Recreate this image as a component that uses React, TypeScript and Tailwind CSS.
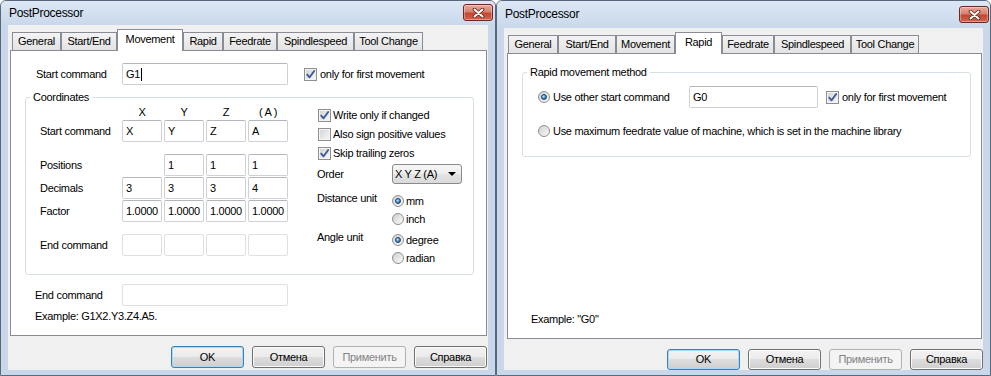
import React from "react";

const font =
  "font-['Liberation_Sans',Arial,sans-serif] text-[11px] tracking-[-0.3px] text-black";

const btnGrad =
  "bg-[linear-gradient(#f2f2f2_0%,#ebebeb_50%,#dddddd_50%,#cfcfcf_100%)]";

function Check({ on }: { on?: boolean }) {
  return (
    <span className="flex h-[13px] w-[13px] shrink-0 items-center justify-center border border-[#8f8f8f] bg-[linear-gradient(135deg,#d2d2d2,#f9f9f9)] shadow-[inset_0_0_0_1px_#f4f4f4]">
      {on && (
        <svg width="11" height="11" viewBox="0 0 11 11">
          <path
            d="M2.2 5.6 L4.6 8.3 L9.2 2"
            fill="none"
            stroke="#3c5a9a"
            strokeWidth="1.9"
            strokeLinecap="round"
            strokeLinejoin="round"
          />
        </svg>
      )}
    </span>
  );
}

function Radio({ on }: { on?: boolean }) {
  return (
    <span className="flex h-[12px] w-[12px] shrink-0 items-center justify-center rounded-full border border-[#8e8f8f] bg-[linear-gradient(135deg,#cfcfcf,#fbfbfb)]">
      {on && (
        <span className="h-[6px] w-[6px] rounded-full border border-[#1c3f66] bg-[radial-gradient(circle_at_35%_35%,#c6e6fb_0%,#4a95d1_50%,#154b80_100%)]" />
      )}
    </span>
  );
}

function Field({
  className,
  light,
  children,
}: {
  className: string;
  light?: boolean;
  children?: React.ReactNode;
}) {
  return (
    <div
      className={`flex h-[22px] shrink-0 items-center rounded-[2px] border bg-white px-[3px] ${
        light ? "border-[#e0e0e0]" : "border-[#cdd0d6] border-t-[#b3b6bd]"
      } ${className}`}
    >
      {children}
    </div>
  );
}

function Btn({ label, kind }: { label: string; kind?: "default" | "disabled" }) {
  const cls =
    kind === "disabled"
      ? "border-[#adb2b5] bg-[#f4f4f4] text-[#838383]"
      : kind === "default"
      ? `border-[#3c7fb1] ${btnGrad} shadow-[inset_0_0_0_1px_#a6dbf7]`
      : `border-[#707070] ${btnGrad} shadow-[inset_0_0_0_1px_#fbfbfb]`;
  return (
    <div
      className={`flex h-full w-[73px] items-center justify-center rounded-[3px] border ${cls}`}
    >
      {label}
    </div>
  );
}

function CloseBtn({ className }: { className: string }) {
  return (
    <div
      className={`flex h-[17px] w-[30px] items-center justify-center rounded-[3px] border border-[#6b2a20] bg-[linear-gradient(#e9a99b_0%,#d88170_45%,#c4472f_55%,#d2654f_100%)] shadow-[inset_0_0_0_1px_rgba(255,255,255,0.35)] ${className}`}
    >
      <svg width="13" height="10" viewBox="0 0 13 10">
        <path
          d="M2.5 1.5 L10.5 8.5 M10.5 1.5 L2.5 8.5"
          stroke="#5a2118"
          strokeWidth="3.6"
          strokeLinecap="round"
        />
        <path
          d="M2.5 1.5 L10.5 8.5 M10.5 1.5 L2.5 8.5"
          stroke="#ffffff"
          strokeWidth="2"
          strokeLinecap="round"
        />
      </svg>
    </div>
  );
}

type TabDef = { label: string; w: string };

function Tabs({ tabs, active }: { tabs: TabDef[]; active: number }) {
  return (
    <div className="ml-[4px] mt-[4px] flex h-[21px] shrink-0 items-end">
      {tabs.map((t, i) =>
        i === active ? (
          <div
            key={t.label}
            className={`relative z-10 -mb-px flex h-[22px] shrink-0 items-center justify-center border border-b-0 border-[#898c95] bg-white pb-[2px] ${t.w}`}
          >
            {t.label}
          </div>
        ) : (
          <div
            key={t.label}
            className={`flex h-[18px] shrink-0 items-center justify-center border border-b-0 border-[#898c95] bg-[linear-gradient(#f3f3f3,#e3e3e3)] ${t.w}`}
          >
            {t.label}
          </div>
        )
      )}
    </div>
  );
}

function TitleBar({
  h,
  textMt,
  closeMt,
  pr,
}: {
  h: string;
  textMt: string;
  closeMt: string;
  pr: string;
}) {
  return (
    <div
      className={`flex shrink-0 items-start justify-between rounded-t-[5px] bg-[linear-gradient(#dce7f5,#c9d8eb)] pl-[8px] ${h} ${pr}`}
    >
      <span className={`text-[12px] leading-[14px] ${textMt}`}>PostProcessor</span>
      <CloseBtn className={closeMt} />
    </div>
  );
}

function Cell({ v, light }: { v?: string; light?: boolean }) {
  return (
    <Field className="w-[40px]" light={light}>
      {v}
    </Field>
  );
}

function LeftDialog() {
  const tabs: TabDef[] = [
    { label: "General", w: "w-[49px]" },
    { label: "Start/End", w: "w-[56px]" },
    { label: "Movement", w: "w-[66px]" },
    { label: "Rapid", w: "w-[40px]" },
    { label: "Feedrate", w: "w-[54px]" },
    { label: "Spindlespeed", w: "w-[77px]" },
    { label: "Tool Change", w: "w-[69px]" },
  ];
  return (
    <div className="flex h-[376px] w-[496px] shrink-0 flex-col rounded-t-[6px] border border-[#59687c] bg-[#c8d7ea]">
      <TitleBar h="h-[24px]" textMt="mt-[5px]" closeMt="mt-[3px]" pr="pr-[2px]" />
      <div className="mx-[7px] flex flex-1 flex-col bg-[#f0f0f0]">
        <Tabs tabs={tabs} active={2} />
        <div className="ml-[2px] flex h-[286px] w-[477px] flex-col border border-[#898c95] bg-white">
          <div className="mt-[12px] flex h-[22px] items-center">
            <span className="ml-[25px] w-[86px]">Start command</span>
            <Field className="w-[166px]">
              G1
              <span className="ml-[1px] h-[13px] w-px bg-black" />
            </Field>
            <span className="ml-[16px]">
              <Check on />
            </span>
            <span className="ml-[3px]">only for first movement</span>
          </div>

          <fieldset className="ml-[14px] mt-[6px] h-[184px] w-[449px] rounded-[3px] border border-[#d5dfe5]">
            <legend className="ml-[4px] px-[3px] leading-[13px]">Coordinates</legend>
            <div className="flex">
              <div className="flex flex-col pl-[14px]">
                <div className="flex h-[16px] items-center">
                  <span className="w-[82px]" />
                  <div className="flex gap-[2px]">
                    <span className="w-[40px] text-center">X</span>
                    <span className="w-[40px] text-center">Y</span>
                    <span className="w-[40px] text-center">Z</span>
                    <span className="w-[40px] text-center">( A )</span>
                  </div>
                </div>
                <div className="flex h-[22px] items-center">
                  <span className="w-[82px]">Start command</span>
                  <div className="flex gap-[2px]">
                    <Cell v="X" />
                    <Cell v="Y" />
                    <Cell v="Z" />
                    <Cell v="A" />
                  </div>
                </div>
                <div className="mt-[12px] flex h-[22px] items-center">
                  <span className="w-[82px]">Positions</span>
                  <div className="flex gap-[2px]">
                    <span className="w-[40px]" />
                    <Cell v="1" />
                    <Cell v="1" />
                    <Cell v="1" />
                  </div>
                </div>
                <div className="mt-[1px] flex h-[22px] items-center">
                  <span className="w-[82px]">Decimals</span>
                  <div className="flex gap-[2px]">
                    <Cell v="3" />
                    <Cell v="3" />
                    <Cell v="3" />
                    <Cell v="4" />
                  </div>
                </div>
                <div className="mt-[1px] flex h-[22px] items-center">
                  <span className="w-[82px]">Factor</span>
                  <div className="flex gap-[2px]">
                    <Cell v="1.0000" />
                    <Cell v="1.0000" />
                    <Cell v="1.0000" />
                    <Cell v="1.0000" />
                  </div>
                </div>
                <div className="mt-[12px] flex h-[22px] items-center">
                  <span className="w-[82px]">End command</span>
                  <div className="flex gap-[2px]">
                    <Cell light />
                    <Cell light />
                    <Cell light />
                    <Cell light />
                  </div>
                </div>
              </div>

              <div className="ml-[29px] flex flex-col pt-[2px]">
                <div className="flex h-[19px] items-center pl-[1px]">
                  <Check on />
                  <span className="ml-[2px]">Write only if changed</span>
                </div>
                <div className="flex h-[19px] items-center pl-[1px]">
                  <Check />
                  <span className="ml-[2px]">Also sign positive values</span>
                </div>
                <div className="flex h-[19px] items-center pl-[1px]">
                  <Check on />
                  <span className="ml-[2px]">Skip trailing zeros</span>
                </div>
                <div className="flex h-[22px] items-center">
                  <span className="w-[75px]">Order</span>
                  <div
                    className={`flex h-[20px] w-[70px] items-center justify-between rounded-[3px] border border-[#8a8a8a] bg-[linear-gradient(#f6f6f6_0%,#eeeeee_50%,#e4e4e4_50%,#dadada_100%)] pl-[2px] pr-[5px]`}
                  >
                    <span>X Y Z (A)</span>
                    <svg width="8" height="4" viewBox="0 0 8 4">
                      <path d="M0 0 H8 L4 4 Z" fill="#000" />
                    </svg>
                  </div>
                </div>
                <div className="mt-[7px] flex">
                  <span className="w-[75px] leading-[13px]">Distance unit</span>
                  <div className="flex flex-col">
                    <div className="flex h-[18px] items-center">
                      <Radio on />
                      <span className="ml-[2px]">mm</span>
                    </div>
                    <div className="flex h-[18px] items-center">
                      <Radio />
                      <span className="ml-[2px]">inch</span>
                    </div>
                  </div>
                </div>
                <div className="mt-[3px] flex">
                  <span className="w-[75px] leading-[13px]">Angle unit</span>
                  <div className="flex flex-col">
                    <div className="flex h-[18px] items-center">
                      <Radio on />
                      <span className="ml-[2px]">degree</span>
                    </div>
                    <div className="flex h-[18px] items-center">
                      <Radio />
                      <span className="ml-[2px]">radian</span>
                    </div>
                  </div>
                </div>
              </div>
            </div>
          </fieldset>

          <div className="mt-[9px] flex h-[22px] items-center">
            <span className="ml-[24px] w-[87px]">End command</span>
            <Field className="w-[166px]" light />
          </div>
          <div className="ml-[24px] mt-[3px] leading-[14px]">Example: G1X2.Y3.Z4.A5.</div>
        </div>
        <div className="mt-[10px] flex h-[22px] justify-end gap-[8px] pr-[1px]">
          <Btn label="OK" kind="default" />
          <Btn label="Отмена" />
          <Btn label="Применить" kind="disabled" />
          <Btn label="Справка" />
        </div>
      </div>
      <div className="h-[5px] shrink-0" />
    </div>
  );
}

function RightDialog() {
  const tabs: TabDef[] = [
    { label: "General", w: "w-[50px]" },
    { label: "Start/End", w: "w-[58px]" },
    { label: "Movement", w: "w-[59px]" },
    { label: "Rapid", w: "w-[47px]" },
    { label: "Feedrate", w: "w-[52px]" },
    { label: "Spindlespeed", w: "w-[77px]" },
    { label: "Tool Change", w: "w-[68px]" },
  ];
  return (
    <div className="flex h-[376px] w-[495px] shrink-0 flex-col rounded-t-[6px] border border-[#59687c] bg-[#c8d7ea]">
      <TitleBar h="h-[27px]" textMt="mt-[6px]" closeMt="mt-[5px]" pr="pr-[1px]" />
      <div className="mx-[7px] flex flex-1 flex-col bg-[#f0f0f0]">
        <Tabs tabs={tabs} active={3} />
        <div className="ml-[3px] flex h-[286px] w-[475px] flex-col border border-[#898c95] bg-white">
          <fieldset className="ml-[14px] mt-[12px] h-[91px] w-[449px] rounded-[3px] border border-[#d5dfe5]">
            <legend className="ml-[4px] px-[3px] leading-[13px]">Rapid movement method</legend>
            <div className="mt-[7px] flex h-[22px] items-center pl-[15px]">
              <Radio on />
              <span className="ml-[3px] w-[136px]">Use other start command</span>
              <Field className="w-[129px]">G0</Field>
              <span className="ml-[8px]">
                <Check on />
              </span>
              <span className="ml-[3px]">only for first movement</span>
            </div>
            <div className="mt-[12px] flex h-[22px] items-center pl-[15px]">
              <Radio />
              <span className="ml-[3px]">
                Use maximum feedrate value of machine, which is set in the machine library
              </span>
            </div>
          </fieldset>
          <div className="mb-[12px] ml-[23px] mt-auto leading-[14px]">Example: "G0"</div>
        </div>
        <div className="mt-[10px] flex h-[21px] justify-end gap-[8px]">
          <Btn label="OK" kind="default" />
          <Btn label="Отмена" />
          <Btn label="Применить" kind="disabled" />
          <Btn label="Справка" />
        </div>
      </div>
      <div className="h-[5px] shrink-0" />
    </div>
  );
}

export default function App() {
  return (
    <div className={`flex h-[376px] w-[991px] overflow-hidden bg-white ${font}`}>
      <LeftDialog />
      <RightDialog />
    </div>
  );
}
